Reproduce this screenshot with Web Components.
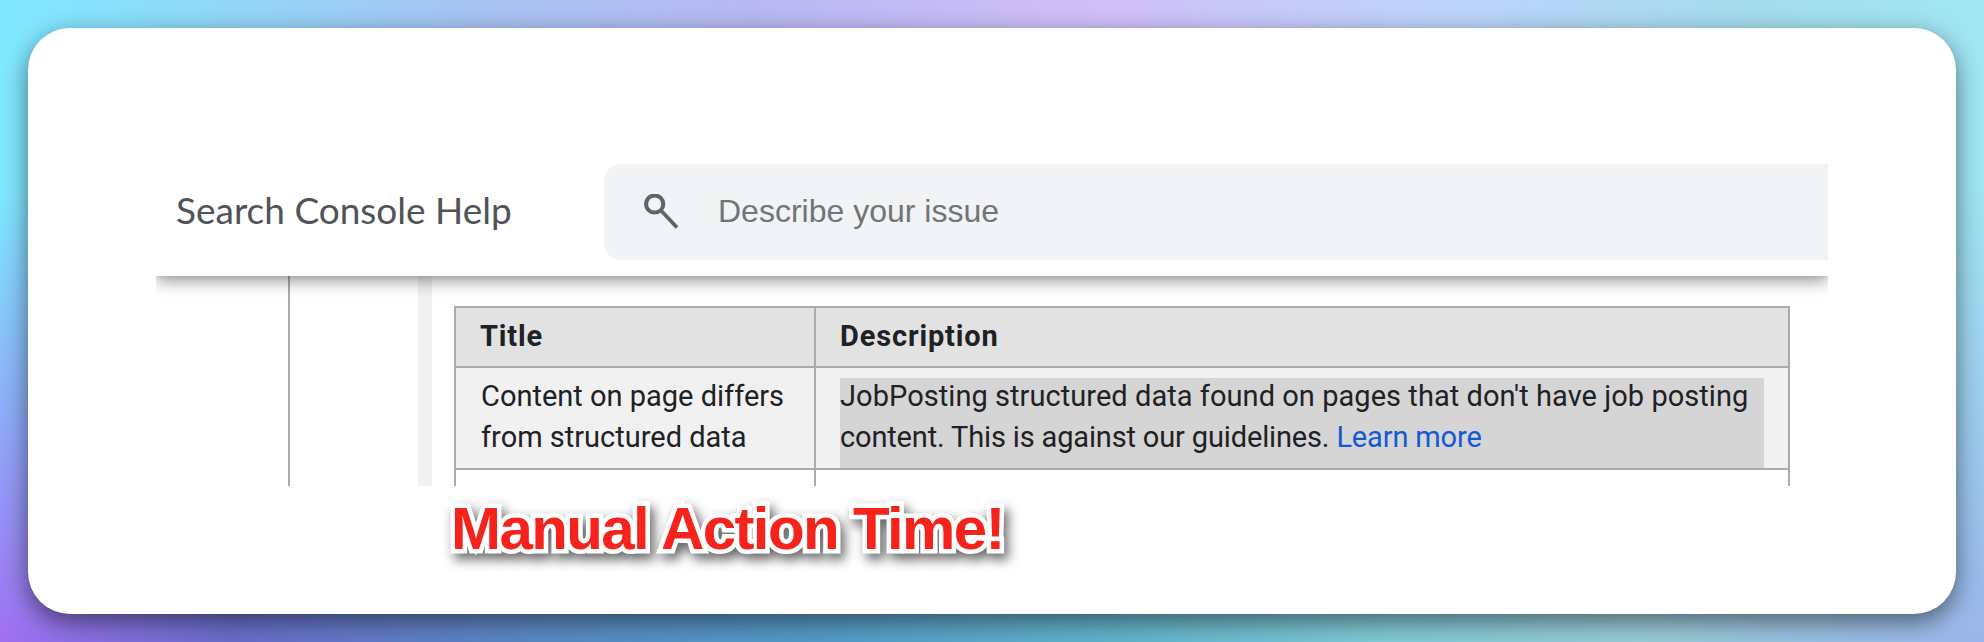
<!DOCTYPE html>
<html>
<head>
<meta charset="utf-8">
<title>Manual Action Time</title>
<style>
  html, body { margin: 0; height: 100%; }
</style>
</head>
<body>
<post-backdrop>
  <help-shot>
    <help-header slot="top" title-text="Search Console Help" placeholder="Describe your issue"></help-header>
    <help-table></help-table>
  </help-shot>
  <shout-label>Manual Action Time!</shout-label>
</post-backdrop>

<script>
class postBackdrop extends HTMLElement {
  constructor() {
    super();
    this.attachShadow({ mode: "open" });
    this.shadowRoot.innerHTML = `
      <style>
        :host {
          display: block;
          position: relative;
          width: 1984px;
          height: 642px;
          overflow: hidden;
          background: linear-gradient(90deg, #7fe9ff 0, #a6c4f3 460px, #b8b8f3 760px, #d0bff8 1100px, #bed3fa 1430px, #a4dcee 1750px, #a0e6f3 100%);
        }
        .bottom {
          position: absolute;
          inset: 0;
          background: linear-gradient(90deg, #a06ff2 0, #6a6ccb 230px, #5a88c4 520px, #529ac6 800px, #62b6cc 1130px, #80cad6 1380px, #9accd8 1640px, #9ab4ea 100%);
          -webkit-mask-image: linear-gradient(180deg, transparent 0, transparent 30%, #000 100%);
          mask-image: linear-gradient(180deg, transparent 0, transparent 30%, #000 100%);
        }
        .wrap {
          position: relative;
          box-sizing: border-box;
          height: 100%;
          padding: 28px;
        }
        .card {
          box-sizing: border-box;
          height: 586px;
          background: #fff;
          border-radius: 42px;
          box-shadow: 0 8px 24px rgba(0, 0, 0, .5);
          padding: 136px 128px 0;
        }
      </style>
      <div class="bottom"></div>
      <div class="wrap">
        <div class="card"><slot></slot></div>
      </div>
    `;
  }
}
customElements.define("post-backdrop", postBackdrop);

class helpShot extends HTMLElement {
  constructor() {
    super();
    this.attachShadow({ mode: "open" });
    this.shadowRoot.innerHTML = `
      <style>
        :host {
          display: block;
          height: 322px;
          overflow: hidden;
        }
      </style>
      <slot name="top"></slot>
      <slot></slot>
    `;
  }
}
customElements.define("help-shot", helpShot);

class helpHeader extends HTMLElement {
  constructor() {
    super();
    this.attachShadow({ mode: "open" });
  }
  connectedCallback() {
    this.shadowRoot.innerHTML = `
      <style>
        :host {
          display: block;
          position: relative;
          z-index: 1;
          height: 112px;
          background: #fff;
          box-shadow: 0 4px 16px rgba(0, 0, 0, .46);
        }
        .row {
          display: flex;
          height: 96px;
          align-items: center;
        }
        h1 {
          margin: 0 0 5px 20px;
          width: 428px;
          flex: none;
          font: 400 37px Lato, sans-serif;
          color: #505357;
        }
        .search {
          flex: 1;
          height: 96px;
          display: flex;
          align-items: center;
          background: #f1f3f4;
          border-radius: 17px 0 0 17px;
        }
        svg { margin-left: 40px; flex: none; display: block; }
        span {
          margin: 0 0 2px 38px;
          font: 400 32px "Liberation Sans", Arial, sans-serif;
          color: #70757a;
        }
      </style>
      <div class="row">
        <h1>${this.getAttribute("title-text")}</h1>
        <div class="search">
          <svg width="36" height="36" viewBox="0 0 36 36" fill="none" stroke="#5f6368">
            <circle cx="10.7" cy="10" r="8.6" stroke-width="4"/>
            <path d="M17 16.5 L33 33.5" stroke-width="3.8"/>
          </svg>
          <span>${this.getAttribute("placeholder")}</span>
        </div>
      </div>
    `;
  }
}
customElements.define("help-header", helpHeader);

class helpTable extends HTMLElement {
  constructor() {
    super();
    this.attachShadow({ mode: "open" });
    this.shadowRoot.innerHTML = `
      <style>
        :host {
          display: grid;
          grid-template-columns: 134px 128px 14px 1fr;
          height: 210px;
          font: 400 29px Roboto, sans-serif;
          color: #202124;
        }
        .nav { border-right: 2px solid #ababab; }
        .strip { background: #f1f1f1; }
        .main { padding: 30px 38px 0 22px; }
        .grid {
          display: grid;
          grid-template-columns: 358px 1fr;
          border-top: 2px solid #ababab;
          border-left: 2px solid #ababab;
          border-right: 2px solid #ababab;
        }
        .cell {
          border-bottom: 2px solid #ababab;
          box-sizing: border-box;
          padding-left: 25px;
        }
        .cell.second { border-left: 2px solid #ababab; padding-left: 24px; }
        .head {
          height: 60px;
          background: #e2e2e2;
          font-weight: 700;
          letter-spacing: .85px;
          line-height: 56px;
          padding-left: 24px;
        }
        .body {
          height: 102px;
          background: #f1f1f1;
          line-height: 41px;
          padding-top: 8px;
        }
        .body.second { padding-top: 10px; }
        .mark {
          display: flow-root;
          background: #d5d5d5;
          height: 90px;
          margin-right: 24px;
        }
        .mark div { margin-top: -2px; letter-spacing: .05px; }
        .mark span { letter-spacing: -.15px; }
        a { color: #1558d6; text-decoration: none; }
        .blank { height: 40px; }
      </style>
      <div class="nav"></div>
      <div></div>
      <div class="strip"></div>
      <div class="main">
        <div class="grid">
          <div class="cell head">Title</div>
          <div class="cell second head">Description</div>
          <div class="cell body">Content on page differs<br>from structured data</div>
          <div class="cell second body"><div class="mark"><div>JobPosting structured data found on pages that don't have job posting<br><span>content. This is against our guidelines. <a>Learn more</a></span></div></div></div>
          <div class="blank"></div>
          <div class="blank" style="border-left:2px solid #ababab"></div>
        </div>
      </div>
    `;
  }
}
customElements.define("help-table", helpTable);

class shoutLabel extends HTMLElement {
  constructor() {
    super();
    this.attachShadow({ mode: "open" });
    this.shadowRoot.innerHTML = `
      <style>
        :host {
          position: absolute;
          left: 451px;
          top: 494px;
          display: block;
          font: 700 60px/70px "Liberation Sans", Arial, sans-serif;
          letter-spacing: -1.6px;
          color: #f5231b;
          white-space: nowrap;
          filter: drop-shadow(4px 6px 6px rgba(0, 0, 0, .6));
        }
        span {
          -webkit-text-stroke: 9px #fff;
          paint-order: stroke fill;
        }
      </style>
      <span><slot></slot></span>
    `;
  }
}
customElements.define("shout-label", shoutLabel);
</script>
</body>
</html>
